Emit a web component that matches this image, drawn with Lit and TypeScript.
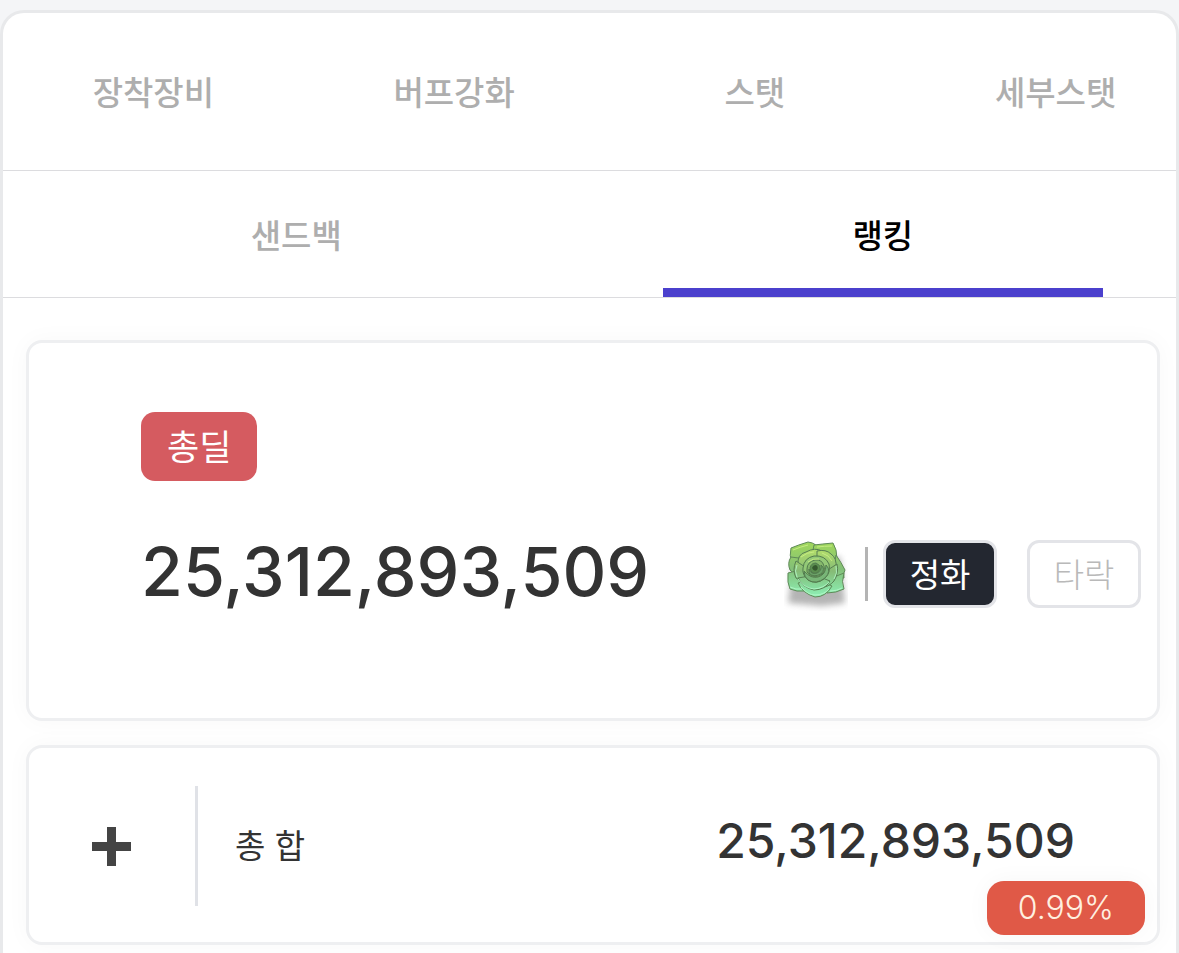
import { LitElement, html, css, svg } from "lit";
import { customElement, property, state } from "lit/decorators.js";
import { classMap } from "lit/directives/class-map.js";

const TOTAL = 25312893509;
const format = (value: number) => value.toLocaleString("en-US");

@customElement("succulent-icon")
class SucculentIcon extends LitElement {
  static styles = css`
    :host {
      display: block;
      flex: none;
      width: 64px;
      height: 74px;
    }
    .art {
      display: block;
      width: 100%;
      height: 100%;
    }
  `;

  render() {
    return html`
      <svg class="art" viewBox="0 0 64 74" aria-hidden="true">
        <defs>
          <linearGradient id="leaf" x1="0" y1="4" x2="0" y2="60" gradientUnits="userSpaceOnUse">
            <stop offset="0" stop-color="#a3d95a" />
            <stop offset="0.5" stop-color="#83bf78" />
            <stop offset="1" stop-color="#8df0b6" />
          </linearGradient>
          <linearGradient id="inner" x1="0" y1="14" x2="0" y2="54" gradientUnits="userSpaceOnUse">
            <stop offset="0" stop-color="#b0dc6c" />
            <stop offset="0.5" stop-color="#86bb76" />
            <stop offset="1" stop-color="#86e3a6" />
          </linearGradient>
          <filter id="soft" x="-20%" y="-20%" width="140%" height="140%">
            <feGaussianBlur stdDeviation="3" />
          </filter>
        </defs>
        ${svg`
          <path d="M10 20L56 20L61 66L38 69L4 66Z" fill="#777" opacity="0.55" filter="url(#soft)" />
          <g fill="url(#leaf)" stroke="#5f8a58" stroke-width="1" stroke-linejoin="round">
            <path d="M7 11Q14 8 24 5Q33 6 36 14L24 30L8 26Q5 18 7 11Z" />
            <path d="M30 8Q38 7 49 6Q53 12 53 22L40 28L28 18Z" />
            <path d="M7 20Q3 26 6 33L14 40L22 22Z" />
            <path d="M52 18Q57 25 61 33Q59 36 60 41L48 40Z" />
            <path d="M4 36Q3 46 6 52Q13 55 20 54L26 44L12 34Z" />
            <path d="M60 36Q57 45 60 52Q52 56 43 56L40 44Z" />
            <path d="M14 46Q18 56 31 60Q42 60 48 49L32 42Z" />
          </g>
          <g fill="url(#inner)" stroke="#567f52" stroke-width="1" stroke-linejoin="round">
            <path d="M14 28Q13 17 22 15Q31 10 38 14L35 26L20 32Z" />
            <path d="M33 14Q42 12 47 17Q53 21 52 31L42 34L33 24Z" />
            <path d="M12 24Q8 33 12 41Q17 46 24 46L24 32Z" />
            <path d="M53 27Q55 36 50 44Q45 50 36 51L36 38Z" />
            <path d="M14 41Q19 51 30 53Q41 53 46 44L31 38Z" />
          </g>
          <g fill="none" stroke="#b5f8c9" stroke-width="1" opacity="0.85">
            <path d="M6 50Q12 53 18 52M17 50Q24 58 31 58Q40 58 45 52M46 54Q53 54 58 51M14 42Q20 51 30 52Q40 51 45 45M13 28Q10 34 13 40M50 42Q54 36 52 29" />
          </g>
          <g stroke="#527b4e" stroke-width="1">
            <path d="M19 31Q20 21 30 19Q41 18 45 27Q47 36 40 42Q32 48 24 43Q18 38 19 31Z" fill="#93c977" />
            <path d="M20 34Q27 42 34 40Q42 38 42 28Q48 34 41 41Q32 48 24 43Q20 40 20 34Z" fill="#78b577" />
            <path d="M23 32Q23 25 31 23Q38 22 40 29Q42 36 35 39Q27 41 23 35Z" fill="#86b96c" />
            <path d="M25 32Q27 38 33 36Q38 34 37 28Q42 32 37 37Q29 41 25 36Z" fill="#6ba268" />
            <path d="M26 31Q27 26 32 26Q37 28 36 32Q34 37 29 36Q26 34 26 31Z" fill="#5b8e50" />
          </g>
          <path d="M28 31Q29 28 32 28Q35 30 33 33Q30 35 28 31Z" fill="#36592f" />
          <path d="M9 13Q16 10 24 8M33 10Q41 9 48 9M17 20Q23 15 30 15M38 16Q45 18 48 24M24 25Q29 21 35 22" fill="none" stroke="#c6ec83" stroke-width="1" />
        `}
      </svg>
    `;
  }
}

@customElement("tab-row")
class TabRow extends LitElement {
  @property({ attribute: false }) tabs: string[] = [];
  @property() current = "";

  static styles = css`
    :host {
      display: block;
    }
    .row {
      display: grid;
      grid-auto-flow: column;
      grid-auto-columns: 1fr;
      height: 100%;
    }
    .tab {
      display: grid;
      grid-template-columns: 1fr 6fr 1fr;
      grid-template-rows: 1fr;
      padding: 0;
      border: 0;
      background: none;
      color: #aeaeae;
      font: 500 33px/48px Inter, "Noto Sans CJK KR", sans-serif;
      cursor: pointer;
    }
    .label {
      grid-column: 2;
      display: grid;
      place-items: center;
      padding-top: 12px;
      border-bottom: 9px solid transparent;
      white-space: nowrap;
    }
    .active {
      color: #000;
    }
    .active .label {
      border-bottom-color: #4b40cd;
    }
  `;

  private select(name: string) {
    this.dispatchEvent(new CustomEvent("tab-select", { detail: name }));
  }

  render() {
    return html`
      <div class="row" role="tablist">
        ${this.tabs.map(
          (name) => html`
            <button
              class=${classMap({ tab: true, active: name === this.current })}
              role="tab"
              aria-selected=${name === this.current}
              @click=${() => this.select(name)}
            >
              <span class="label">${name}</span>
            </button>
          `
        )}
      </div>
    `;
  }
}

@customElement("app-root")
class AppRoot extends LitElement {
  @state() private tab = "랭킹";
  @state() private mode = "정화";

  static styles = css`
    :host {
      display: block;
      box-sizing: border-box;
      min-height: 100vh;
      padding-top: 10px;
      background: #f4f5f7;
      color: #333;
      font-family: Inter, "Noto Sans CJK KR", sans-serif;
    }
    .panel {
      box-sizing: border-box;
      min-height: calc(100vh - 10px);
      overflow: hidden;
      border: 3px solid #e8e9eb;
      border-bottom: 0;
      border-radius: 24px 24px 0 0;
      background: #fff;
    }
    .tabs {
      border-bottom: 1px solid #dcdcdf;
    }
    .primary {
      height: 157px;
      margin-right: -30px;
    }
    .secondary {
      height: 126px;
    }
    .cards {
      display: grid;
      gap: 24px;
      padding: 42px 16px 7px 23px;
    }
    .card {
      border: 3px solid #eeeff1;
      border-radius: 16px;
      background: #fff;
      box-shadow: 0 0 24px rgba(0, 0, 0, 0.03);
    }
    .summary {
      padding: 69px 16px 102px 112px;
    }
    .kind {
      display: block;
      width: max-content;
      padding: 11px 26px 10px;
      border-radius: 14px;
      background: #d55b60;
      color: #fff;
      font-size: 35px;
      line-height: 48px;
    }
    .line {
      display: flex;
      align-items: center;
      margin-top: 51px;
    }
    .total {
      flex: 1;
      font-size: 68px;
      font-weight: 500;
      line-height: 78px;
      padding-bottom: 6px;
    }
    .rule {
      flex: none;
      width: 3px;
      height: 54px;
      margin: 0 15px 0 17px;
      background: #b4b4b4;
    }
    .modes {
      display: flex;
      gap: 30px;
    }
    .mode {
      width: 114px;
      padding: 8px 0 6px;
      border: 3px solid #e3e4e8;
      border-radius: 12px;
      background: #fff;
      color: #b9b9b9;
      font: 300 33px/48px Inter, "Noto Sans CJK KR", sans-serif;
      cursor: pointer;
    }
    .chosen {
      background: #232730;
      color: #fff;
      font-weight: 400;
    }
    .entry {
      position: relative;
      display: flex;
      align-items: center;
      padding: 38px 82px 36px 63px;
    }
    .expand {
      display: block;
      flex: none;
      padding: 0;
      border: 0;
      background: none;
      cursor: pointer;
    }
    .plus {
      display: block;
      width: 39px;
      height: 39px;
    }
    .divider {
      flex: none;
      width: 3px;
      height: 120px;
      margin: 0 37px 0 64px;
      background: #e0e2e7;
    }
    .name {
      flex: 1;
      font-size: 33px;
      line-height: 48px;
    }
    .amount {
      padding-bottom: 10px;
      font-size: 48px;
      font-weight: 500;
      line-height: 60px;
    }
    .share {
      position: absolute;
      right: 12px;
      bottom: 7px;
      padding: 3px 31px;
      border-radius: 17px;
      background: #e05947;
      color: #fff0e0;
      font-size: 32px;
      font-weight: 300;
      line-height: 48px;
      box-shadow: 0 0 24px rgba(0, 0, 0, 0.04);
    }
  `;

  private pick(event: CustomEvent<string>) {
    this.tab = event.detail;
  }

  render() {
    return html`
      <main class="panel">
        <nav>
          <div class="tabs">
            <tab-row
              class="primary"
              .tabs=${["장착장비", "버프강화", "스탯", "세부스탯"]}
              .current=${this.tab}
              @tab-select=${this.pick}
            ></tab-row>
          </div>
          <div class="tabs">
            <tab-row
              class="secondary"
              .tabs=${["샌드백", "랭킹"]}
              .current=${this.tab}
              @tab-select=${this.pick}
            ></tab-row>
          </div>
        </nav>
        <div class="cards">
          <section class="card summary">
            <span class="kind">총딜</span>
            <div class="line">
              <span class="total">${format(TOTAL)}</span>
              <succulent-icon></succulent-icon>
              <span class="rule"></span>
              <div class="modes">
                ${["정화", "타락"].map(
                  (name) => html`
                    <button
                      class=${classMap({ mode: true, chosen: name === this.mode })}
                      aria-pressed=${name === this.mode}
                      @click=${() => (this.mode = name)}
                    >${name}</button>
                  `
                )}
              </div>
            </div>
          </section>
          <section class="card entry">
            <button class="expand" aria-label="총 합">
              <svg class="plus" viewBox="0 0 39 39" aria-hidden="true">
                <path d="M15 0h9v15h15v9H24v15h-9V24H0v-9h15z" fill="#444" />
              </svg>
            </button>
            <span class="divider"></span>
            <span class="name">총 합</span>
            <span class="amount">${format(TOTAL)}</span>
            <span class="share">0.99%</span>
          </section>
        </div>
      </main>
    `;
  }
}
